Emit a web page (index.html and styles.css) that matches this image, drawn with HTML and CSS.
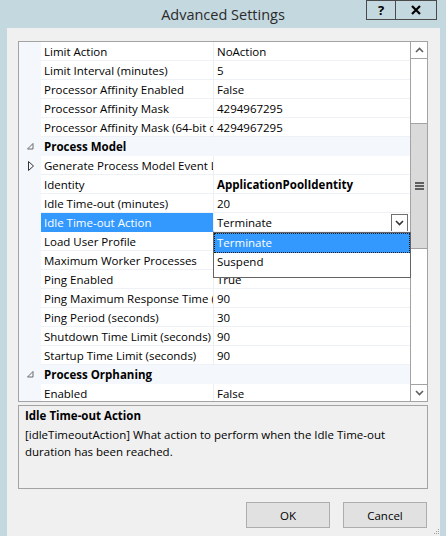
FILE: index.html
```html
<!DOCTYPE html>
<html>
<head>
<meta charset="utf-8">
<link rel="stylesheet" href="styles.css">
</head>
<body>
<div class="window">
  <div class="titlebar">
    <div></div>
    <div class="title">Advanced Settings</div>
    <div class="ctrls">
      <div class="cbtn help">?</div>
      <div class="cbtn close"><svg width="10" height="10" viewBox="0 0 10 10"><path d="M1 1L9 9M9 1L1 9" stroke="#000" stroke-width="2.2" fill="none"/></svg></div>
    </div>
  </div>
  <div class="client">
    <div class="grid">
      <div class="rows">
        <div class="row"><span class="gut"></span><span class="name">Limit Action</span><span class="val">NoAction</span></div>
        <div class="row"><span class="gut"></span><span class="name">Limit Interval (minutes)</span><span class="val">5</span></div>
        <div class="row"><span class="gut"></span><span class="name">Processor Affinity Enabled</span><span class="val">False</span></div>
        <div class="row"><span class="gut"></span><span class="name">Processor Affinity Mask</span><span class="val">4294967295</span></div>
        <div class="row"><span class="gut"></span><span class="name">Processor Affinity Mask (64-bit option)</span><span class="val">4294967295</span></div>
        <div class="row cat"><span class="gut"><svg width="7" height="7" viewBox="0 0 7 7"><path d="M6 0.5V6H0.5Z" fill="none" stroke="#6a6a6a" stroke-width="1"/></svg></span><span class="catname">Process Model</span></div>
        <div class="row"><span class="gut"><svg width="6" height="10" viewBox="0 0 6 10"><path d="M0.5 0.5L5.5 5L0.5 9.5Z" fill="none" stroke="#333" stroke-width="1"/></svg></span><span class="name">Generate Process Model Event Log Entry</span><span class="val"></span></div>
        <div class="row"><span class="gut"></span><span class="name">Identity</span><span class="val bold">ApplicationPoolIdentity</span></div>
        <div class="row"><span class="gut"></span><span class="name">Idle Time-out (minutes)</span><span class="val">20</span></div>
        <div class="row sel"><span class="gut"></span><span class="name">Idle Time-out Action</span><span class="val"><span class="valtext">Terminate</span><span class="ddbtn"><svg width="9" height="6" viewBox="0 0 9 6"><path d="M1 1L4.5 4.5L8 1" fill="none" stroke="#333" stroke-width="1.6"/></svg></span></span></div>
        <div class="row"><span class="gut"></span><span class="name">Load User Profile</span><span class="val">True</span></div>
        <div class="row"><span class="gut"></span><span class="name">Maximum Worker Processes</span><span class="val">1</span></div>
        <div class="row"><span class="gut"></span><span class="name">Ping Enabled</span><span class="val">True</span></div>
        <div class="row"><span class="gut"></span><span class="name">Ping Maximum Response Time (seconds)</span><span class="val">90</span></div>
        <div class="row"><span class="gut"></span><span class="name">Ping Period (seconds)</span><span class="val">30</span></div>
        <div class="row"><span class="gut"></span><span class="name">Shutdown Time Limit (seconds)</span><span class="val">90</span></div>
        <div class="row"><span class="gut"></span><span class="name">Startup Time Limit (seconds)</span><span class="val">90</span></div>
        <div class="row cat"><span class="gut"><svg width="7" height="7" viewBox="0 0 7 7"><path d="M6 0.5V6H0.5Z" fill="none" stroke="#6a6a6a" stroke-width="1"/></svg></span><span class="catname">Process Orphaning</span></div>
        <div class="row"><span class="gut"></span><span class="name">Enabled</span><span class="val">False</span></div>
      </div>
      <div class="vscroll">
        <div class="sbtn up"><svg width="9" height="6" viewBox="0 0 9 6"><path d="M1 5L4.5 1.5L8 5" fill="none" stroke="#606060" stroke-width="1.6"/></svg></div>
        <div class="track">
          <div class="space1"></div>
          <div class="thumb"><svg width="9" height="8" viewBox="0 0 9 8"><rect x="0" y="0" width="9" height="2" fill="#606060"/><rect x="0" y="3" width="9" height="2" fill="#606060"/><rect x="0" y="6" width="9" height="2" fill="#606060"/></svg></div>
        </div>
        <div class="sbtn down"><svg width="9" height="6" viewBox="0 0 9 6"><path d="M1 1L4.5 4.5L8 1" fill="none" stroke="#606060" stroke-width="1.6"/></svg></div>
      </div>
      <div class="dropdown">
        <div class="opt selopt">Terminate</div>
        <div class="opt">Suspend</div>
      </div>
    </div>
    <div class="desc">
      <div class="desc-title">Idle Time-out Action</div>
      <div class="desc-text">[idleTimeoutAction] What action to perform when the Idle Time-out<br>duration has been reached.</div>
    </div>
    <div class="buttons">
      <button class="btn">OK</button>
      <button class="btn">Cancel</button>
    </div>
    <div class="grip"><svg width="6" height="6" viewBox="0 0 6 6"><rect x="4" y="0" width="1" height="1" fill="#a0a0a0"/><rect x="2" y="2" width="1" height="1" fill="#a0a0a0"/><rect x="4" y="2" width="1" height="1" fill="#a0a0a0"/><rect x="0" y="4" width="1" height="1" fill="#a0a0a0"/><rect x="2" y="4" width="1" height="1" fill="#a0a0a0"/><rect x="4" y="4" width="1" height="1" fill="#a0a0a0"/></svg></div>
  </div>
</div>
</body>
</html>
```
FILE: styles.css
```css
* { box-sizing: border-box; }
html, body { margin: 0; padding: 0; }
body {
  font-family: "Open Sans", "Noto Sans", "Liberation Sans", sans-serif;
  font-size: 11.5px;
  color: #000;
  background: #c4d8df;
}
.window {
  width: 446px;
  height: 536px;
  background: #c4d8df;
  overflow: hidden;
  display: flex;
  flex-direction: column;
}
.titlebar {
  height: 28px;
  display: grid;
  grid-template-columns: 1fr auto 1fr;
  flex: none;
}
.title {
  font-size: 14.5px;
  color: #2b2b2b;
  line-height: 28px;
  padding-top: 1px;
}
.ctrls {
  justify-self: end;
  align-self: start;
  display: flex;
  margin-right: 9px;
}
.cbtn {
  height: 20px;
  border: 1px solid #4a4a4a;
  display: flex;
  align-items: center;
  justify-content: center;
  font-weight: bold;
  font-size: 13px;
  line-height: 1;
}
.cbtn.help { width: 29px; border-right: none; }
.cbtn.close { width: 42px; }
.client {
  position: relative;
  flex: 1;
  margin: 0 6px 0 7px;
  background: #f0f0f0;
  padding: 13px 12px 0 11px;
  display: flex;
  flex-direction: column;
}
.grid {
  position: relative;
  height: 361px;
  border: 1px solid #a3a3a3;
  background: #fff;
  display: flex;
  flex: none;
}
.rows {
  width: 391px;
  height: 359px;
  overflow: hidden;
}
.row {
  display: grid;
  grid-template-columns: 22px 173px 196px;
  height: 19px;
  line-height: 17px;
  white-space: nowrap;
}
.gut {
  background: #f4f7fb;
  display: flex;
  align-items: center;
  justify-content: center;
  padding-left: 1px;
}
.name {
  padding: 1px 0 0 3px;
  overflow: hidden;
  border-right: 1px solid #eceff4;
  border-bottom: 1px solid #eef1f6;
}
.val {
  padding: 1px 0 0 3px;
  overflow: hidden;
  border-bottom: 1px solid #eef1f6;
}
.bold { font-weight: bold; }
.cat { background: #f4f7fb; }
.cat .catname {
  grid-column: 2 / 4;
  padding: 1px 0 0 3px;
  font-weight: bold;
}
.sel .name {
  background: #3399ff;
  color: #fff;
  border-bottom-color: #3399ff;
}
.sel .val {
  display: flex;
  align-items: flex-start;
  justify-content: space-between;
  padding-right: 2px;
}
.ddbtn {
  width: 17px;
  height: 18px;
  border: 1px solid #707070;
  background: #fff;
  display: flex;
  align-items: center;
  justify-content: center;
}
.vscroll {
  width: 17px;
  border-left: 1px solid #a3a3a3;
  display: flex;
  flex-direction: column;
  background: #fff;
}
.sbtn {
  height: 17px;
  display: flex;
  align-items: center;
  justify-content: center;
  flex: none;
}
.sbtn.up { border-bottom: 1px solid #a3a3a3; }
.sbtn.down { border-top: 1px solid #a3a3a3; }
.track {
  flex: 1;
  display: flex;
  flex-direction: column;
}
.space1 { height: 64px; }
.thumb {
  height: 126px;
  background: #dadada;
  border-top: 1px solid #a3a3a3;
  border-bottom: 1px solid #a3a3a3;
  display: flex;
  align-items: center;
  justify-content: center;
}
.dropdown {
  position: absolute;
  left: 194px;
  top: 190px;
  width: 198px;
  height: 46px;
  border: 1px solid #646464;
  background: #fff;
  padding: 0;
}
.opt {
  height: 19px;
  line-height: 18px;
  padding-left: 3px;
}
.selopt {
  height: 20px;
  line-height: 18px;
  background: #3399ff;
  color: #fff;
  border: 1px dotted #1a1a1a;
  padding-left: 2px;
}
.desc {
  margin-top: 3px;
  height: 84px;
  border: 1px solid #a3a3a3;
  padding: 1px 6px;
  flex: none;
}
.desc-title { font-weight: bold; line-height: 17px; }
.desc-text { line-height: 17px; padding-top: 2px; }
.buttons {
  margin-top: 13px;
  display: flex;
  justify-content: flex-end;
  gap: 13px;
  padding-right: 1px;
}
.btn {
  width: 84px;
  height: 26px;
  background: #e1e1e1;
  border: 1px solid #adadad;
  font-family: inherit;
  font-size: 11.5px;
  color: #000;
  padding: 0;
  margin: 0;
}
.grip {
  position: absolute;
  right: 0;
  bottom: 1px;
  width: 6px;
  height: 6px;
  line-height: 0;
}
```
